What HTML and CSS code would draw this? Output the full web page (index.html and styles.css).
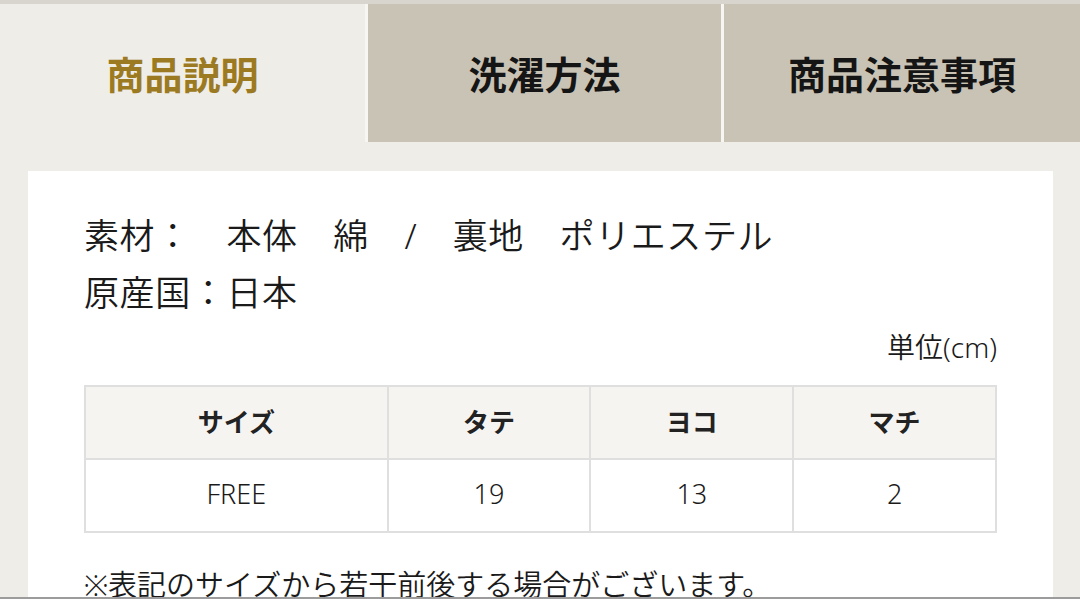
FILE: index.html
```html
<!DOCTYPE html>
<html lang="ja">
<head>
    <meta charset="UTF-8">
    <meta name="viewport" content="width=device-width, initial-scale=1.0">
    <title>商品説明</title>
    <link rel="stylesheet" href="styles.css">
</head>
<body>
    <div class="page">
        <nav class="tabs">
            <div class="tab active">商品説明</div>
            <div class="tab">洗濯方法</div>
            <div class="tab">商品注意事項</div>
        </nav>

        <section class="panel">
            <p class="spec">素材：　本体　綿　/　裏地　ポリエステル<br>原産国：日本</p>
            <p class="unit">単位(cm)</p>

            <table class="size-table">
                <thead>
                    <tr>
                        <th class="col-size">サイズ</th>
                        <th>タテ</th>
                        <th>ヨコ</th>
                        <th>マチ</th>
                    </tr>
                </thead>
                <tbody>
                    <tr>
                        <td>FREE</td>
                        <td>19</td>
                        <td>13</td>
                        <td>2</td>
                    </tr>
                </tbody>
            </table>

            <p class="note">※表記のサイズから若干前後する場合がございます。</p>
        </section>
    </div>
</body>
</html>
```

FILE: styles.css
```css
body {
    margin: 0;
    padding: 0;
    font-family: "Noto Sans", "Noto Sans CJK JP", sans-serif;
    font-weight: 350;
    color: #1a1a1a;
    background-color: #efede8;
}

.page {
    height: 599px;
    box-sizing: border-box;
    overflow: hidden;
    border-top: 4px solid #d8d5ce;
    border-bottom: 2px solid #9c9c9c;
}

.tabs {
    display: flex;
    gap: 3px;
    height: 138px;
    background-color: #f7f6f3;
}

.tab {
    flex: 1;
    display: flex;
    justify-content: center;
    align-items: center;
    background-color: #c9c3b5;
    font-family: "Noto Sans CJK JP", sans-serif;
    font-size: 38px;
    font-weight: bold;
    color: #151515;
    padding-bottom: 2px;
}

.tab:first-child {
    flex: 0 0 365px;
}

.tab:nth-child(2) {
    flex: 0 0 353px;
}

.tab.active {
    background-color: #efede8;
    color: #9c7a22;
}

.panel {
    margin: 29px 27px 0 28px;
    padding: 36px 56px 0 56px;
    background-color: white;
}

.spec {
    margin: 0;
    font-size: 35px;
    line-height: 57px;
    letter-spacing: 0.6px;
}

.unit {
    margin: 6px 0 18px 0;
    text-align: right;
    font-size: 28px;
    line-height: 40px;
}

.size-table {
    width: 100%;
    border-collapse: collapse;
    table-layout: fixed;
    font-size: 27px;
}

.size-table th,
.size-table td {
    border: 2px solid #dfdfdf;
    text-align: center;
    padding: 0 0 4px 0;
}

.size-table th {
    height: 67px;
    background-color: #f6f4f1;
    font-family: "Noto Sans CJK JP", sans-serif;
    font-size: 26px;
    font-weight: bold;
    color: #222;
}

.size-table td {
    height: 67px;
}

.size-table .col-size {
    width: 33%;
}

.note {
    margin: 30px 0 0 0;
    font-size: 29px;
    line-height: 44px;
}
```
